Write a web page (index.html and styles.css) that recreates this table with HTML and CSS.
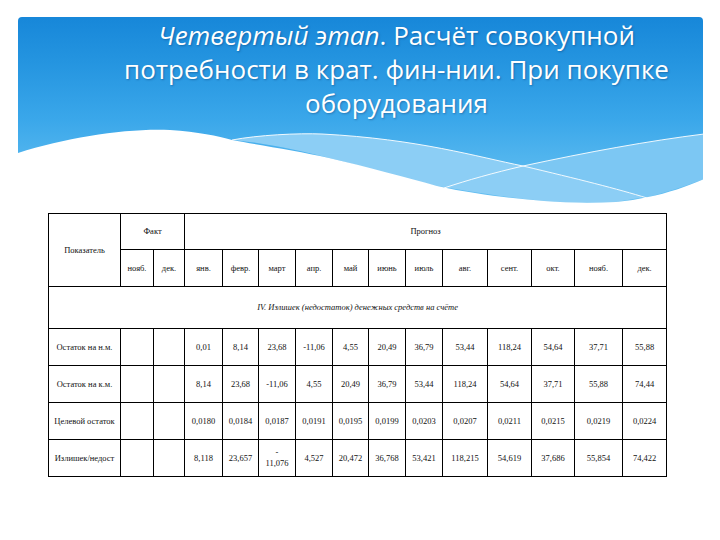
FILE: index.html
```html
<!DOCTYPE html>
<html lang="ru">
<head>
<meta charset="utf-8">
<title>Четвертый этап</title>
<link rel="stylesheet" href="styles.css">
</head>
<body>
<header class="banner">
  <svg class="wave" viewBox="0 0 685 186" preserveAspectRatio="none" aria-hidden="true">
    <path class="band" d="M214,123 C240,118 280,116 304,117 C400,122 460,140 505,149 C560,162 600,172 627,180 L598,185 C570,186 540,186 526,184 C480,180 440,172 419,169 C380,160 340,148 311,141 C280,133 240,125 214,123 Z"/>
    <path class="band2" d="M505,149 C570,135 630,124 686,117 L686,162 C665,170 645,176 630,180 L627,180 C590,170 545,158 505,149 Z"/>
    <path class="white" d="M0,136 C50,120 110,111 152,113 C180,115 200,119 214,123 C240,128 280,134 311,141 C350,150 390,161 419,169 C460,178 500,182 526,184 C550,186 575,186 598,185 C610,184 620,182 630,180 C650,176 670,169 686,162 L686,186 L0,186 Z"/>
    <path class="line" d="M214,123 C240,118 280,116 304,117 C400,122 460,140 505,149 C560,162 600,172 629,181"/>
    <path class="line" d="M426,171 C450,163 475,156 505,149 C570,135 630,124 686,117"/>
  </svg>
  <h1 class="title"><em>Четвертый этап</em>. Расчёт совокупной<br>потребности в крат. фин-нии. При покупке<br>оборудования</h1>
</header>

<table class="grid">
  <colgroup>
    <col class="c72"><col class="c33"><col class="c31"><col class="c38"><col class="c36"><col class="c37"><col class="c37"><col class="c36"><col class="c37"><col class="c37"><col class="c45"><col class="c44"><col class="c43"><col class="c48"><col class="c44">
  </colgroup>
  <tr class="h1">
    <td rowspan="2">Показатель</td>
    <td colspan="2">Факт</td>
    <td colspan="12">Прогноз</td>
  </tr>
  <tr class="h2">
    <td>нояб.</td><td>дек.</td><td>янв.</td><td>февр.</td><td>март</td><td>апр.</td><td>май</td><td>июнь</td><td>июль</td><td>авг.</td><td>сент.</td><td>окт.</td><td>нояб.</td><td>дек.</td>
  </tr>
  <tr class="note">
    <td colspan="15"><em>IV. Излишек (недостаток) денежных средств на счёте</em></td>
  </tr>
  <tr class="row">
    <td>Остаток на н.м.</td><td></td><td></td><td>0,01</td><td>8,14</td><td>23,68</td><td>-11,06</td><td>4,55</td><td>20,49</td><td>36,79</td><td>53,44</td><td>118,24</td><td>54,64</td><td>37,71</td><td>55,88</td>
  </tr>
  <tr class="row">
    <td>Остаток на к.м.</td><td></td><td></td><td>8,14</td><td>23,68</td><td>-11,06</td><td>4,55</td><td>20,49</td><td>36,79</td><td>53,44</td><td>118,24</td><td>54,64</td><td>37,71</td><td>55,88</td><td>74,44</td>
  </tr>
  <tr class="row">
    <td>Целевой остаток</td><td></td><td></td><td>0,0180</td><td>0,0184</td><td>0,0187</td><td>0,0191</td><td>0,0195</td><td>0,0199</td><td>0,0203</td><td>0,0207</td><td>0,0211</td><td>0,0215</td><td>0,0219</td><td>0,0224</td>
  </tr>
  <tr class="row">
    <td>Излишек/недост</td><td></td><td></td><td>8,118</td><td>23,657</td><td>-<br>11,076</td><td>4,527</td><td>20,472</td><td>36,768</td><td>53,421</td><td>118,215</td><td>54,619</td><td>37,686</td><td>55,854</td><td>74,422</td>
  </tr>
</table>
</body>
</html>
```

FILE: styles.css
```css
html, body {
  margin: 0;
  padding: 0;
  background: #ffffff;
}

body {
  width: 720px;
  height: 540px;
  overflow: hidden;
  font-family: "Liberation Serif", "Times New Roman", serif;
}

.banner {
  position: relative;
  height: 186px;
  margin: 17px 17px 0 18px;
  border-radius: 4px 4px 0 0;
  overflow: hidden;
  background: linear-gradient(180deg, #1787d9 0%, #2595e0 25%, #3aa7ea 55%, #50b4ee 75%, #66c0f2 100%);
}

.wave {
  position: absolute;
  left: 0;
  top: 0;
  width: 100%;
  height: 100%;
}

.wave .band {
  fill: #8ccef5;
}

.wave .band2 {
  fill: #7cc7f3;
}

.wave .white {
  fill: #ffffff;
}

.wave .line {
  fill: none;
  stroke: #ffffff;
  stroke-width: 1;
  opacity: 0.9;
}

.title {
  position: relative;
  margin: 0;
  padding: 1px 0 0 72px;
  text-align: center;
  font-family: "Open Sans", "Noto Sans", sans-serif;
  font-weight: 400;
  font-size: 26px;
  line-height: 34px;
  color: #ffffff;
  text-shadow: 1px 1px 2px rgba(0, 40, 90, 0.35);
}

.title em {
  font-style: italic;
}

.grid {
  margin: 10px 0 0 48px;
  width: 618px;
  table-layout: fixed;
  border-collapse: collapse;
  font-size: 8.5px;
  color: #111111;
}

.grid td {
  border: 1px solid #000000;
  padding: 0 1px;
  text-align: center;
  vertical-align: middle;
  line-height: 11px;
  overflow: hidden;
  white-space: nowrap;
}

.c72 { width: 72px; }
.c33 { width: 33px; }
.c31 { width: 31px; }
.c38 { width: 38px; }
.c36 { width: 36px; }
.c37 { width: 37px; }
.c45 { width: 45px; }
.c44 { width: 44px; }
.c43 { width: 43px; }
.c48 { width: 48px; }

.h1 { height: 36px; }
.h2 { height: 37px; }
.note { height: 42px; }
.row { height: 37px; }

.note em {
  font-style: italic;
}
```
